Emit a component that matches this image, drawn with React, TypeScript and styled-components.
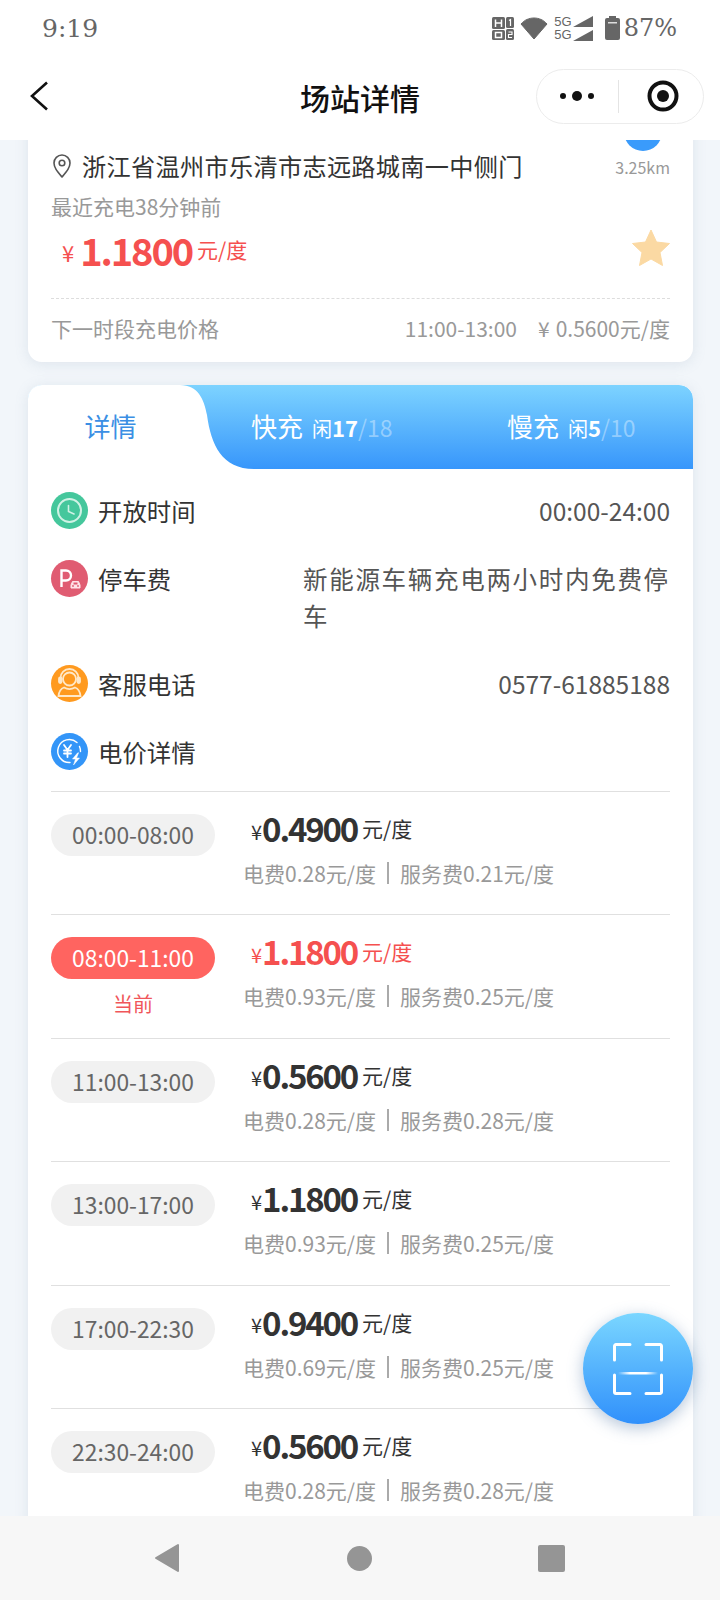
import React from 'react';
import styled, { createGlobalStyle } from 'styled-components';

const GlobalStyle = createGlobalStyle`
  html, body {
    margin: 0;
    padding: 0;
    background: #f2f6fa;
  }
  * {
    box-sizing: border-box;
  }
`

const Page = styled.div`
  position: relative;
  width: 720px;
  height: 1600px;
  display: flex;
  flex-direction: column;
  overflow: hidden;
  background: #f2f6fa;
  font-family: "Noto Sans CJK SC", "Noto Sans", sans-serif;
  color: #333;
`

const Header = styled.header`
  flex: none;
  height: 140px;
  background: #fff;
  position: relative;
  z-index: 2;
`

const StatusBar = styled.div`
  height: 50px;
  padding: 6px 43px 0 42px;
  display: flex;
  align-items: center;
  justify-content: space-between;
  color: #666;
  font-family: "DejaVu Serif", serif;
`

const Clock = styled.span`
  font-size: 25px;
  font-weight: 400;
`

const StatusIcons = styled.div`
  display: flex;
  align-items: center;
`

const Percent = styled.span`
  font-size: 24px;
  margin-left: 4px;
`

const FiveG = styled.div`
  display: flex;
  flex-direction: column;
  margin: 0 1px 0 6px;
  font-family: "Liberation Sans", sans-serif;
  font-size: 13px;
  line-height: 13px;
  color: #666;
`

const NavBar = styled.nav`
  height: 90px;
  padding: 2px 16px 0 30px;
  display: flex;
  align-items: center;
  justify-content: space-between;
  position: relative;
`

const Title = styled.h1`
  position: absolute;
  left: 0;
  right: 0;
  top: 27px;
  margin: 0;
  text-align: center;
  font-size: 30px;
  line-height: 40px;
  font-weight: 500;
  color: #111;
`

const Capsule = styled.div`
  width: 168px;
  height: 55px;
  border: 1px solid #ececec;
  border-radius: 28px;
  display: flex;
  align-items: center;
  background: #fff;
  position: relative;
`

const CapsulePart = styled.div<{ $right?: boolean }>`
  flex: 1;
  display: flex;
  align-items: center;
  justify-content: center;
  padding-left: ${p => (p.$right ? 4 : 0)}px;
`

const CapsuleLine = styled.div`
  width: 1px;
  height: 33px;
  background: #e4e4e4;
`

const Scroller = styled.main`
  flex: 1;
  min-height: 0;
  overflow: hidden;
  padding: 0 27px 0 28px;
`

const Card = styled.section`
  background: #fff;
  border-radius: 14px;
  box-shadow: 0 2px 14px rgba(120, 140, 165, 0.16);
`

const StationCard = styled(Card)`
  margin-top: -40px;
  padding: 12px 23px 0 23px;
  height: 262px;
`

const AddressRow = styled.div`
  display: flex;
  justify-content: space-between;
  align-items: flex-end;
  height: 71px;
`

const Address = styled.div`
  display: flex;
  align-items: center;
  font-size: 24.2px;
  line-height: 34px;
  letter-spacing: 0.3px;
  color: #333;
  svg {
    margin-right: 9px;
  }
`

const Distance = styled.div`
  display: flex;
  flex-direction: column;
  align-items: center;
  font-size: 16px;
  line-height: 20px;
  color: #999;
  margin-bottom: 6px;
`

const NavDot = styled.div`
  width: 38px;
  height: 38px;
  border-radius: 50%;
  background: #3a9bfb;
  margin-bottom: 6px;
`

const Recent = styled.div`
  margin-top: 8px;
  font-size: 21px;
  line-height: 30px;
  color: #999;
`

const PriceRow = styled.div`
  display: flex;
  align-items: center;
  justify-content: space-between;
  height: 58px;
  margin-top: -1px;
  svg {
    margin-bottom: 4px;
  }
`

const BigPrice = styled.div`
  display: flex;
  align-items: center;
  padding-left: 11px;
  color: #f5504f;
`

const BigYen = styled.span`
  font-size: 22px;
  margin: 6px 6px 0 0;
`

const BigNumber = styled.span`
  font-size: 38px;
  font-weight: 700;
  letter-spacing: -2.1px;
`

const Unit = styled.span`
  font-size: 21px;
  margin-left: 5px;
`

const NextRow = styled.div`
  margin-top: 20px;
  height: 58px;
  border-top: 1px dashed #ddd;
  display: flex;
  align-items: center;
  justify-content: space-between;
  font-size: 21px;
  color: #999;
`

const NextPrice = styled.div`
  display: flex;
  gap: 21px;
`

const YenGap = styled.span`
  margin-right: 6px;
`

const DetailCard = styled(Card)`
  margin-top: 23px;
  overflow: hidden;
`

const TabBar = styled.div`
  position: relative;
  height: 84px;
  padding-bottom: 4px;
  display: grid;
  grid-template-columns: 165px 256px 1fr;
  align-items: center;
  background: linear-gradient(180deg, #7dd3ff 0%, #3796fb 100%);
  border-radius: 14px 14px 0 0;
  svg {
    position: absolute;
    left: 0;
    top: 0;
  }
`

const ActiveTab = styled.div`
  position: relative;
  z-index: 1;
  text-align: center;
  font-size: 26px;
  color: #3b8fe4;
`

const Tab = styled.div`
  padding-left: 58px;
  display: flex;
  align-items: baseline;
  color: #fff;
  font-size: 26px;
  position: relative;
  z-index: 1;
`

const Free = styled.span`
  margin-left: 9px;
  font-size: 20px;
`

const FreeCount = styled.b`
  font-size: 22px;
  font-weight: 700;
`

const Total = styled.span`
  font-size: 23px;
  color: rgba(255, 255, 255, 0.38);
`

const DetailBody = styled.div`
  padding: 23px 23px 0 23px;
  display: flex;
  flex-direction: column;
  gap: 31px;
`

const DetailRow = styled.div`
  display: flex;
  justify-content: space-between;
  align-items: flex-start;
`

const DetailLabel = styled.div`
  height: 37px;
  display: flex;
  align-items: center;
  gap: 10px;
  font-size: 24.4px;
  line-height: 37px;
  color: #333;
`

const DetailValue = styled.div<{ $wide?: boolean }>`
  font-size: 24.5px;
  line-height: 37px;
  color: #555;
  width: ${p => (p.$wide ? '367px' : 'auto')};
  letter-spacing: ${p => (p.$wide ? '1.7px' : '0')};
`

const PriceList = styled.div`
  margin: 21px 23px 0 23px;
`

const PriceItem = styled.div`
  height: 123.4px;
  border-top: 1px solid #e0e0e0;
  padding-top: 22px;
  display: grid;
  grid-template-columns: 164px 1fr;
  column-gap: 28px;
`

const TimeCol = styled.div`
  display: flex;
  flex-direction: column;
  align-items: center;
`

const TimePill = styled.div<{ $current?: boolean }>`
  width: 164px;
  height: 42px;
  border-radius: 21px;
  background: ${p => (p.$current ? '#ff6460' : '#f1f1f1')};
  color: ${p => (p.$current ? '#fff' : '#666')};
  font-size: 22.8px;
  line-height: 42px;
  text-align: center;
`

const CurrentTag = styled.div`
  margin-top: 11px;
  font-size: 20px;
  line-height: 28px;
  color: #f0565a;
`

const PriceCol = styled.div`
  display: flex;
  flex-direction: column;
`

const RowPrice = styled.div<{ $current?: boolean }>`
  display: flex;
  align-items: center;
  height: 40px;
  margin-top: -6px;
  padding-left: 8px;
  color: ${p => (p.$current ? '#f5504f' : '#333')};
`

const RowYen = styled.span`
  font-size: 20px;
  margin-top: 6px;
`

const RowNumber = styled.span`
  font-size: 33px;
  line-height: 40px;
  font-weight: 700;
  letter-spacing: -2.2px;
`

const RowUnit = styled.span`
  font-size: 21px;
  margin-left: 5px;
`

const Breakdown = styled.div`
  margin-top: 10px;
  display: flex;
  align-items: center;
  font-size: 21px;
  line-height: 30px;
  color: #999;
`

const Bar = styled.i`
  width: 2px;
  height: 22px;
  margin: 0 11px;
  background: #aaa;
`

const ScanButton = styled.button`
  position: absolute;
  left: 583px;
  top: 1313px;
  width: 110px;
  height: 111px;
  padding: 0;
  border: none;
  border-radius: 50%;
  background: linear-gradient(180deg, #7ad6ff 0%, #3090fb 100%);
  box-shadow: 0 4px 16px rgba(70, 110, 160, 0.4);
  display: flex;
  align-items: center;
  justify-content: center;
  z-index: 3;
`

const BottomBar = styled.footer`
  flex: none;
  height: 84px;
  padding: 0 155px 0 154px;
  background: #f7f7f7;
  display: flex;
  align-items: center;
  justify-content: space-between;
  position: relative;
  z-index: 2;
`

const NavSquare = styled.div`
  width: 27px;
  height: 27px;
  border-radius: 2px;
  background: #959595;
`

const NavCircle = styled.div`
  width: 25px;
  height: 25px;
  border-radius: 50%;
  background: #959595;
`

const IconCircle = styled.span<{ $color: string }>`
  flex: none;
  width: 37px;
  height: 37px;
  border-radius: 50%;
  background: ${p => p.$color};
  display: flex;
  align-items: center;
  justify-content: center;
`

const prices = [
  { time: '00:00-08:00', price: '0.4900', power: '0.28', service: '0.21' },
  { time: '08:00-11:00', price: '1.1800', power: '0.93', service: '0.25', current: true },
  { time: '11:00-13:00', price: '0.5600', power: '0.28', service: '0.28' },
  { time: '13:00-17:00', price: '1.1800', power: '0.93', service: '0.25' },
  { time: '17:00-22:30', price: '0.9400', power: '0.69', service: '0.25' },
  { time: '22:30-24:00', price: '0.5600', power: '0.28', service: '0.28' },
]

const SimIcon = () => (
  <svg width="23" height="24" viewBox="0 0 23 24">
    <rect x="0" y="1" width="13" height="12" rx="1.5" fill="#666" />
    <rect x="0" y="14" width="13" height="10" rx="1.5" fill="#666" />
    <rect x="14" y="1" width="8" height="11" rx="1.5" fill="#666" />
    <rect x="14" y="13" width="8" height="11" rx="1.5" fill="#666" />
    <path d="M3.5 3.5v7.5M9.5 3.5v7.5M3.5 7h6" stroke="#fff" strokeWidth="1.5" fill="none" />
    <rect x="3.5" y="16.5" width="6" height="5" stroke="#fff" strokeWidth="1.5" fill="none" />
    <path d="M17 4.5l1.5-1v6.5" stroke="#fff" strokeWidth="1.2" fill="none" />
    <path d="M16.5 16h3.5v2.5h-3.5v3h3.5" stroke="#fff" strokeWidth="1.1" fill="none" />
  </svg>
)

const WifiIcon = () => (
  <svg width="28" height="24" viewBox="0 0 28 24" style={{ marginLeft: 5 }}>
    <path d="M1 8C4.5 4 9 2 14 2s9.500 2 13 6L14 23Z" fill="#666" stroke="#666" strokeLinejoin="round" />
  </svg>
)

const SignalIcon = () => (
  <svg width="21" height="25" viewBox="0 0 21 25">
    <path d="M0 11L20 0v11ZM0 25l20-11v11Z" fill="#666" />
  </svg>
)

const BatteryIcon = () => (
  <svg width="15" height="24" viewBox="0 0 15 24" style={{ marginLeft: 11 }}>
    <rect x="4" y="0" width="7" height="3" fill="#666" />
    <rect x="0" y="2" width="15" height="22" rx="2" fill="#666" />
    <rect x="3" y="6" width="9" height="1.500" fill="#ddd" />
  </svg>
)

const ClockIcon = () => (
  <svg width="27" height="27" viewBox="0 0 27 27" fill="none" stroke="#d0f2e5" strokeWidth="2" strokeLinecap="round">
    <circle cx="13.500" cy="13.500" r="11.500" />
    <path d="M12.500 8.500v6l5.500 2.500" strokeWidth="1.600" />
  </svg>
)

const ParkingIcon = () => (
  <svg width="37" height="37" viewBox="0 0 37 37" fill="none">
    <path d="M10.500 27V10.500h4.500a5 5 0 0 1 0 10h-4.500" stroke="#fff" strokeWidth="2.400" />
    <path d="M20 25l1.500-3.500h6l1.500 3.500v3h-9Z" fill="#ffe3e8" stroke="#ffe3e8" strokeLinejoin="round" />
    <rect x="22.500" y="22.500" width="4" height="2" fill="#e05c72" />
    <circle cx="22" cy="26" r="0.900" fill="#e05c72" />
    <circle cx="27" cy="26" r="0.900" fill="#e05c72" />
  </svg>
)

const AgentIcon = () => (
  <svg width="31" height="31" viewBox="0 0 31 31" fill="none" stroke="#ffe8c8" strokeWidth="1.800" strokeLinecap="round">
    <circle cx="15.500" cy="11" r="6.500" />
    <path d="M6.500 13V10a9 9 0 0 1 18 0v3" />
    <rect x="5" y="9.500" width="2.500" height="5.500" rx="1.200" fill="#ffe8c8" />
    <rect x="23.500" y="9.500" width="2.500" height="5.500" rx="1.200" fill="#ffe8c8" />
    <path d="M10 19.500c-3 1-5 4-5.500 8.500h22c-.5-4.500-2.500-7.500-5.500-8.500-3.500 2-7.500 2-11 0Z" />
  </svg>
)

const TariffIcon = () => (
  <svg width="29" height="29" viewBox="0 0 29 29" fill="none" stroke="#fff" strokeLinecap="round">
    <path d="M22 5.500A11.500 11.500 0 1 0 15 25.500" strokeWidth="1.400" />
    <path d="M24.500 9.500a11.500 11.500 0 0 1 1 5" strokeWidth="1.400" />
    <path d="M9 8l3.500 5 3.500-5M12.500 13v7M9 13.500h7M9 16.500h7" strokeWidth="1.800" />
    <path d="M22.500 16l-5 6h3l-2 6 6-7h-3l2-5Z" fill="#fff" strokeWidth="0.500" strokeLinejoin="round" />
  </svg>
)

const ScanIcon = () => (
  <svg width="50" height="52" viewBox="0 0 50 52" fill="none">
    <defs>
      <linearGradient id="scanline" x1="0" x2="1" y1="0" y2="0">
        <stop offset="0" stopColor="#fff" stopOpacity="0" />
        <stop offset="0.3" stopColor="#fff" />
        <stop offset="0.7" stopColor="#fff" />
        <stop offset="1" stopColor="#fff" stopOpacity="0" />
      </linearGradient>
    </defs>
    <path d="M1.500 17V3a1.500 1.500 0 0 1 1.500-1.500h14M33 1.500h14a1.500 1.500 0 0 1 1.500 1.500v14M1.500 32v17a1.500 1.500 0 0 0 1.500 1.500h14M33 50.500h14a1.500 1.500 0 0 0 1.500-1.500V32" stroke="#fff" strokeWidth="3" strokeLinecap="round" />
    <rect x="5" y="29" width="40" height="2.500" fill="url(#scanline)" />
  </svg>
)

export default function App() {
  return (
    <Page>
      <GlobalStyle />
      <Header>
        <StatusBar>
          <Clock>9:19</Clock>
          <StatusIcons>
            <SimIcon />
            <WifiIcon />
            <FiveG>
              <span>5G</span>
              <span>5G</span>
            </FiveG>
            <SignalIcon />
            <BatteryIcon />
            <Percent>87%</Percent>
          </StatusIcons>
        </StatusBar>
        <NavBar>
          <svg width="18" height="30" viewBox="0 0 18 30" fill="none">
            <path d="M17 1.500L2 15l15 13.500" stroke="#111" strokeWidth="2.600" />
          </svg>
          <Title>场站详情</Title>
          <Capsule>
            <CapsulePart>
              <svg width="38" height="14" viewBox="0 0 38 14">
                <circle cx="5" cy="7" r="3" fill="#111" />
                <circle cx="19" cy="7" r="5" fill="#111" />
                <circle cx="33" cy="7" r="3" fill="#111" />
              </svg>
            </CapsulePart>
            <CapsuleLine />
            <CapsulePart $right>
              <svg width="32" height="32" viewBox="0 0 32 32">
                <circle cx="16" cy="16" r="13.500" fill="none" stroke="#111" strokeWidth="4" />
                <circle cx="16" cy="16" r="6" fill="#111" />
              </svg>
            </CapsulePart>
          </Capsule>
        </NavBar>
      </Header>

      <Scroller>
        <StationCard>
          <AddressRow>
            <Address>
              <svg width="22" height="24" viewBox="0 0 22 24" fill="none" stroke="#555" strokeWidth="1.600">
                <path d="M11 23c-5-6-8-9.500-8-14a8 8 0 0 1 16 0c0 4.500-3 8-8 14Z" strokeLinejoin="round" />
                <circle cx="11" cy="9" r="2.800" />
              </svg>
              浙江省温州市乐清市志远路城南一中侧门
            </Address>
            <Distance>
              <NavDot />
              3.25km
            </Distance>
          </AddressRow>
          <Recent>最近充电38分钟前</Recent>
          <PriceRow>
            <BigPrice>
              <BigYen>¥</BigYen>
              <BigNumber>1.1800</BigNumber>
              <Unit>元/度</Unit>
            </BigPrice>
            <svg width="38" height="37" viewBox="0 0 38 37">
              <path d="M19 1l5.500 12 13 1.500-9.500 9 2.500 13L19 30l-11.500 6.500 2.500-13-9.500-9 13-1.500Z" fill="#fbd9a3" stroke="#fbd9a3" strokeLinejoin="round" />
            </svg>
          </PriceRow>
          <NextRow>
            <span>下一时段充电价格</span>
            <NextPrice>
              <span>11:00-13:00</span>
              <span><YenGap>¥</YenGap>0.5600元/度</span>
            </NextPrice>
          </NextRow>
        </StationCard>

        <DetailCard>
          <TabBar>
            <svg width="240" height="84" viewBox="0 0 240 84">
              <path d="M0 0H152C170 0 176 14 179 30C183 60 194 84 226 84H0Z" fill="#fff" />
            </svg>
            <ActiveTab>详情</ActiveTab>
            <Tab>
              快充
              <Free>闲</Free>
              <FreeCount>17</FreeCount>
              <Total>/18</Total>
            </Tab>
            <Tab>
              慢充
              <Free>闲</Free>
              <FreeCount>5</FreeCount>
              <Total>/10</Total>
            </Tab>
          </TabBar>

          <DetailBody>
            <DetailRow>
              <DetailLabel>
                <IconCircle $color="#45c79c"><ClockIcon /></IconCircle>
                开放时间
              </DetailLabel>
              <DetailValue>00:00-24:00</DetailValue>
            </DetailRow>
            <DetailRow>
              <DetailLabel>
                <IconCircle $color="#e05c72"><ParkingIcon /></IconCircle>
                停车费
              </DetailLabel>
              <DetailValue $wide>新能源车辆充电两小时内免费停车</DetailValue>
            </DetailRow>
            <DetailRow>
              <DetailLabel>
                <IconCircle $color="#ff9a1f"><AgentIcon /></IconCircle>
                客服电话
              </DetailLabel>
              <DetailValue>0577-61885188</DetailValue>
            </DetailRow>
            <DetailRow>
              <DetailLabel>
                <IconCircle $color="#3395f8"><TariffIcon /></IconCircle>
                电价详情
              </DetailLabel>
            </DetailRow>
          </DetailBody>

          <PriceList>
            {prices.map(item => (
              <PriceItem key={item.time}>
                <TimeCol>
                  <TimePill $current={item.current}>{item.time}</TimePill>
                  {item.current && <CurrentTag>当前</CurrentTag>}
                </TimeCol>
                <PriceCol>
                  <RowPrice $current={item.current}>
                    <RowYen>¥</RowYen>
                    <RowNumber>{item.price}</RowNumber>
                    <RowUnit>元/度</RowUnit>
                  </RowPrice>
                  <Breakdown>
                    电费{item.power}元/度
                    <Bar />
                    服务费{item.service}元/度
                  </Breakdown>
                </PriceCol>
              </PriceItem>
            ))}
          </PriceList>
        </DetailCard>
      </Scroller>

      <ScanButton>
        <ScanIcon />
      </ScanButton>

      <BottomBar>
        <svg width="26" height="30" viewBox="0 0 26 30">
          <path d="M24 2v26L2 15Z" fill="#959595" stroke="#959595" strokeWidth="2" strokeLinejoin="round" />
        </svg>
        <NavCircle />
        <NavSquare />
      </BottomBar>
    </Page>
  )
}
